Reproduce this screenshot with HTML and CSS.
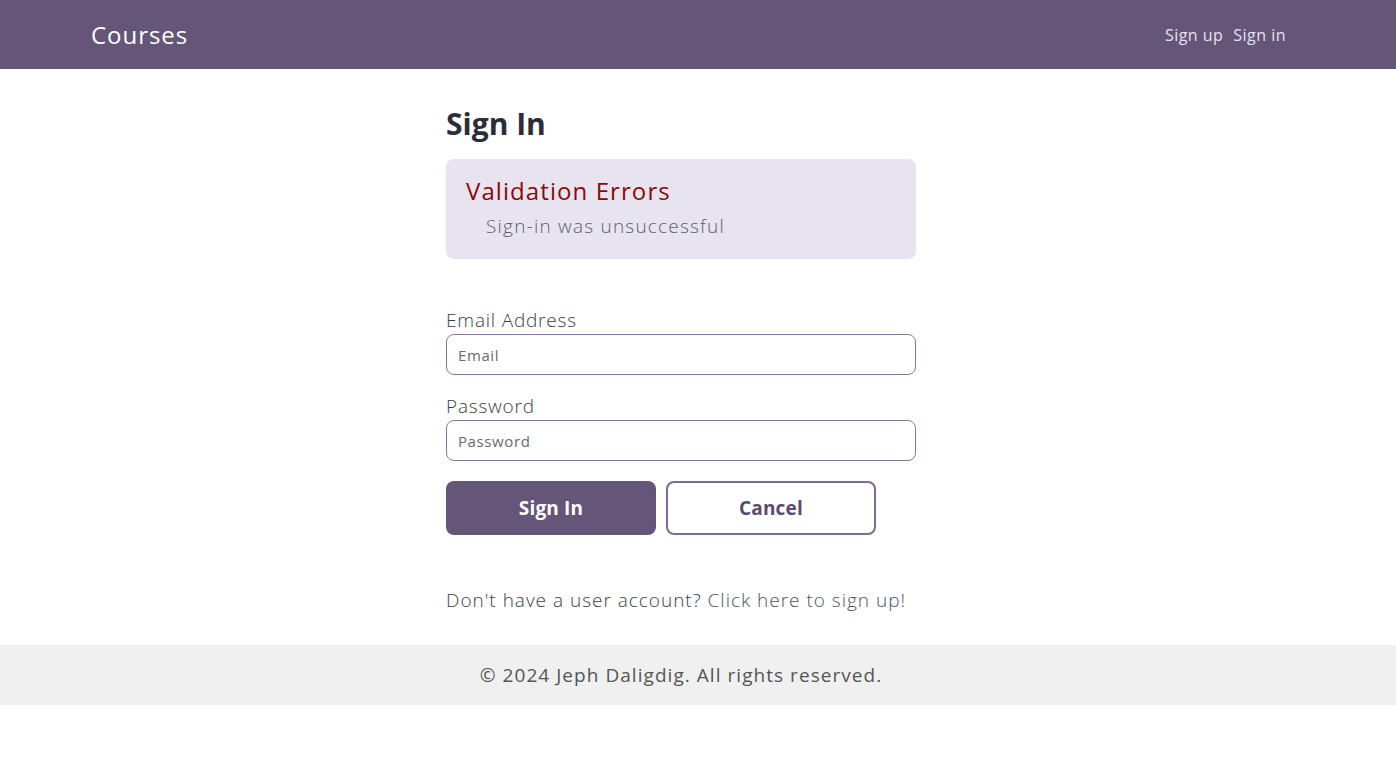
FILE: index.html
```html
<!DOCTYPE html>
<html lang="en">
<head>
<meta charset="utf-8">
<title>Courses</title>
<link rel="stylesheet" href="styles.css">
</head>
<body>
<header class="header">
  <div class="header-inner">
    <span class="logo">Courses</span>
    <nav class="nav">
      <a class="nav-link" href="#">Sign up</a>
      <a class="nav-link" href="#">Sign in</a>
    </nav>
  </div>
</header>
<main class="main">
  <div class="form-wrap">
    <h1 class="title">Sign In</h1>
    <div class="errors">
      <h3 class="errors-title">Validation Errors</h3>
      <ul class="errors-list">
        <li>Sign-in was unsuccessful</li>
      </ul>
    </div>
    <form class="form">
      <label class="label" for="email">Email Address</label>
      <input class="input" id="email" type="email" placeholder="Email">
      <label class="label" for="password">Password</label>
      <input class="input" id="password" type="password" placeholder="Password">
      <div class="buttons">
        <button class="btn btn-primary" type="button">Sign In</button>
        <button class="btn btn-secondary" type="button">Cancel</button>
      </div>
    </form>
    <p class="signup-text">Don't have a user account? <a class="signup-link" href="#">Click here to sign up!</a></p>
  </div>
</main>
<footer class="footer">
  <p class="footer-text">© 2024 Jeph Daligdig. All rights reserved.</p>
</footer>
</body>
</html>
```
FILE: styles.css
```css
* { box-sizing: border-box; }
body {
  margin: 0;
  font-family: "Open Sans", "Liberation Sans", sans-serif;
  color: #3a3d4a;
  background: #fff;
  letter-spacing: 0.05em;
}
.header {
  background: #655579;
  height: 69px;
}
.header-inner {
  height: 100%;
  display: flex;
  align-items: center;
  justify-content: space-between;
  padding: 0 110px 0 91px;
}
.logo {
  color: #fff;
  font-size: 24px;
  font-weight: 400;
  letter-spacing: 0.04em;
}
.nav {
  display: flex;
  gap: 10px;
}
.nav-link {
  color: #e6e1ee;
  text-decoration: none;
  font-size: 16px;
  letter-spacing: 0.03em;
}
.main {
  padding: 37px 0 33px;
}
.form-wrap {
  width: 470px;
  margin-left: calc(50% - 252px);
}
.title {
  margin: 0 0 17px;
  font-size: 30px;
  font-weight: 700;
  line-height: 36px;
  color: #2b2e3a;
  letter-spacing: 0;
}
.errors {
  background: #e7e3ef;
  border-radius: 8px;
  padding: 17px 20px 20px;
  height: 100px;
}
.errors-title {
  margin: 0;
  font-size: 24px;
  font-weight: 400;
  line-height: 30px;
  color: #8b0a0a;
  letter-spacing: 0.045em;
}
.errors-list {
  margin: 7px 0 0;
  padding: 0 0 0 20px;
  list-style: none;
  font-size: 19px;
  font-weight: 300;
  line-height: 26px;
  color: #5c5f6e;
  letter-spacing: 0.064em;
}
.form {
  display: flex;
  flex-direction: column;
  margin-top: 49px;
}
.label {
  font-size: 19px;
  font-weight: 300;
  line-height: 24px;
  color: #3a3d4a;
  margin-bottom: 2px;
}
.input {
  height: 41px;
  border: 1px solid #8a75a0;
  border-radius: 8px;
  padding: 0 11px;
  font-family: inherit;
  font-size: 15px;
  letter-spacing: 0.04em;
  margin-bottom: 19px;
}
.input::placeholder {
  color: #6a6a72;
}
.buttons {
  display: flex;
  gap: 10px;
  margin-top: 1px;
}
.btn {
  width: 210px;
  height: 54px;
  border-radius: 8px;
  font-family: inherit;
  font-size: 19px;
  font-weight: 700;
  letter-spacing: 0.01em;
  cursor: pointer;
}
.btn-primary {
  background: #655579;
  border: none;
  color: #fff;
}
.btn-secondary {
  background: #fff;
  border: 2px solid #7e6a96;
  color: #5a4a72;
}
.signup-text {
  margin: 53px 0 0;
  font-size: 19px;
  font-weight: 300;
  line-height: 24px;
  color: #3a3d4a;
  letter-spacing: 0.052em;
}
.signup-link {
  color: #4a5468;
  text-decoration: none;
}
.footer {
  background: #f0f0f0;
  height: 60px;
  display: flex;
  align-items: center;
  justify-content: center;
  padding-right: 34px;
}
.footer-text {
  margin: 0;
  font-size: 19px;
  color: #555;
  letter-spacing: 0.055em;
}
```
